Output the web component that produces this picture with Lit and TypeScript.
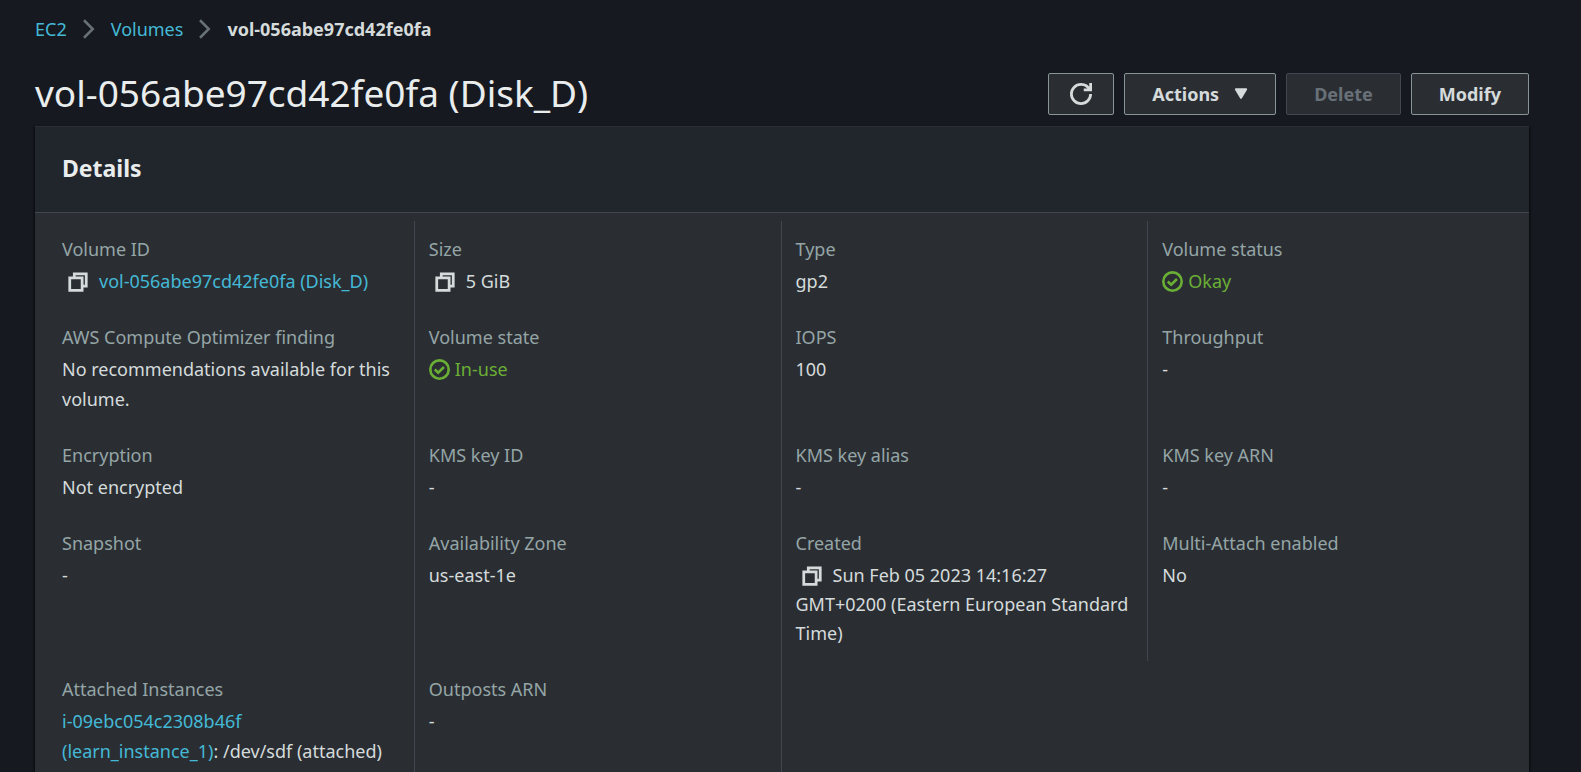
import { LitElement, html, css, svg, nothing, TemplateResult } from "lit";
import { customElement, property } from "lit/decorators.js";

type Field = {
  label: string;
  value?: string;
  link?: string;
  copy?: boolean;
  ok?: boolean;
};

const FIELDS: Field[] = [
  { label: "Volume ID", link: "vol-056abe97cd42fe0fa (Disk_D)", copy: true },
  { label: "Size", value: "5 GiB", copy: true },
  { label: "Type", value: "gp2" },
  { label: "Volume status", value: "Okay", ok: true },
  { label: "AWS Compute Optimizer finding", value: "No recommendations available for this volume." },
  { label: "Volume state", value: "In-use", ok: true },
  { label: "IOPS", value: "100" },
  { label: "Throughput", value: "-" },
  { label: "Encryption", value: "Not encrypted" },
  { label: "KMS key ID", value: "-" },
  { label: "KMS key alias", value: "-" },
  { label: "KMS key ARN", value: "-" },
  { label: "Snapshot", value: "-" },
  { label: "Availability Zone", value: "us-east-1e" },
  { label: "Created", value: "Sun Feb 05 2023 14:16:27 GMT+0200 (Eastern European Standard Time)", copy: true },
  { label: "Multi-Attach enabled", value: "No" },
  { label: "Attached Instances", link: "i-09ebc054c2308b46f (learn_instance_1)", value: ": /dev/sdf (attached)" },
  { label: "Outposts ARN", value: "-" },
];

const ICONS: Record<string, TemplateResult> = {
  chevron: svg`<path d="M4 1l7 7-7 7" />`,
  refresh: svg`<path d="M10 5h5V0" /><path d="M15 8a7 7 0 0 1-7 7 7 7 0 0 1-7-7 7 7 0 0 1 7-7 6.9 6.9 0 0 1 6.3 4" />`,
  copy: svg`<path d="M2 5h9v9H2z" /><path d="M5.3 5V2H14v9h-3" />`,
  check: svg`<circle cx="8" cy="8" r="7" /><path d="M4.4 8l2.6 2.5 4.4-4.4" />`,
  caret: svg`<path d="M2 2.5h12L8 12.5z" fill="currentColor" stroke-linejoin="round" />`,
};

@customElement("ui-icon")
class UiIcon extends LitElement {
  @property() name = "";
  static styles = css`
    :host { display: inline-flex; width: 20px; height: 20px; }
    svg {
      width: 100%; height: 100%; overflow: visible;
      fill: none; stroke: currentColor; stroke-width: 2;
    }
  `;
  render() {
    return html`<svg viewBox="0 0 16 16" aria-hidden="true">${ICONS[this.name] ?? nothing}</svg>`;
  }
}

@customElement("app-root")
class AppRoot extends LitElement {
  static styles = css`
    :host {
      display: block;
      box-sizing: border-box;
      height: 100vh;
      overflow: hidden;
      padding: 14px 52px 0 35px;
      background: #16191f;
      color: #d5dbdb;
      font: 18px/30px "Noto Sans", "Open Sans", sans-serif;
    }
    * { box-sizing: border-box; }
    a { color: #44b9d6; text-decoration: none; }
    .crumbs ol {
      display: flex; align-items: center; gap: 12px;
      margin: 0; padding: 0; list-style: none;
    }
    .crumbs li { display: flex; align-items: center; gap: 12px; }
    .crumbs ui-icon { color: #687078; }
    .crumbs .current { font-weight: 700; }
    .top {
      display: flex; align-items: center; justify-content: space-between;
      padding: 23px 0 5px;
    }
    h1 { margin: 0; padding-bottom: 2px; font-size: 37px; line-height: 52px; font-weight: 400; color: #eaeded; }
    .actions { display: flex; gap: 10px; }
    button {
      display: flex; align-items: center; gap: 15px;
      height: 42px; padding: 0 27px;
      border: 1px solid #879596; border-radius: 2px;
      background: #2a2e33; color: #d5dbdb;
      font: 700 18px/30px "Noto Sans", "Open Sans", sans-serif;
    }
    .square { padding: 0 21px; }
    .square ui-icon { width: 22px; height: 22px; }
    .menu ui-icon { width: 14px; height: 14px; }
    button:disabled { border-color: #414750; color: #687078; }
    .panel {
      border-top: 1px solid #2a2e33;
      background: #2a2e33;
      box-shadow: 0 1px 1px rgba(0, 0, 0, 0.5), 1px 1px 2px rgba(0, 0, 0, 0.5), -1px 1px 2px rgba(0, 0, 0, 0.4);
    }
    .head { padding: 26px 27px 28px; border-bottom: 1px solid #414750; background: #21252c; }
    h2 { margin: 0; font-size: 23px; line-height: 31px; font-weight: 700; color: #eaeded; }
    dl {
      display: grid; grid-template-columns: repeat(4, minmax(0, 1fr));
      margin: 0; padding: 8px 14px 8px 13px;
    }
    .field { padding: 13px 14px; }
    .field:not(:nth-child(4n)) { border-right: 1px solid #414750; }
    dt { color: #95a5a6; }
    dd { margin: 2px 0 0; }
    .copyable { line-height: 29px; padding-top: 1px; }
    .copy {
      display: inline-flex; height: 22px; padding: 0;
      margin: 0 10px 0 5px; border: 0; vertical-align: -5px;
    }
    .copy ui-icon { width: 22px; height: 22px; }
    .status { display: flex; align-items: center; gap: 5px; color: #6aaf35; }
    .status ui-icon { width: 21px; height: 21px; }
  `;

  renderValue(f: Field) {
    if (f.ok) return html`<dd class="status"><ui-icon name="check"></ui-icon><span>${f.value}</span></dd>`;
    const link = f.link ? html`<a href="#">${f.link}</a>` : nothing;
    if (f.copy) {
      return html`<dd class="copyable"><button class="copy" aria-label="Copy ${f.label}"><ui-icon name="copy"></ui-icon></button>${link}${f.value}</dd>`;
    }
    return html`<dd>${link}${f.value}</dd>`;
  }

  render() {
    return html`
      <nav class="crumbs" aria-label="Breadcrumbs">
        <ol>
          <li><a href="#">EC2</a><ui-icon name="chevron"></ui-icon></li>
          <li><a href="#">Volumes</a><ui-icon name="chevron"></ui-icon></li>
          <li class="current" aria-current="page">vol-056abe97cd42fe0fa</li>
        </ol>
      </nav>
      <header class="top">
        <h1>vol-056abe97cd42fe0fa (Disk_D)</h1>
        <div class="actions">
          <button class="square" aria-label="Refresh"><ui-icon name="refresh"></ui-icon></button>
          <button class="menu" aria-haspopup="menu">Actions<ui-icon name="caret"></ui-icon></button>
          <button disabled>Delete</button>
          <button>Modify</button>
        </div>
      </header>
      <section class="panel">
        <div class="head"><h2>Details</h2></div>
        <dl>
          ${FIELDS.map((f) => html`<div class="field"><dt>${f.label}</dt>${this.renderValue(f)}</div>`)}
        </dl>
      </section>
    `;
  }
}
